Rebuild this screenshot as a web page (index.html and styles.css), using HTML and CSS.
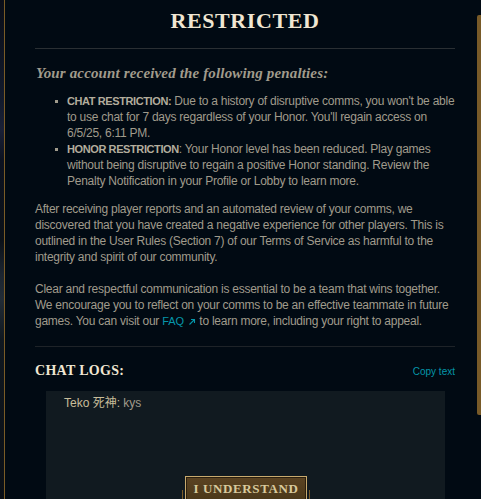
FILE: index.html
```html
<!DOCTYPE html>
<html>
<head>
<meta charset="utf-8">
<link rel="stylesheet" href="styles.css">
</head>
<body>
<div class="page">
  <div class="backdrop"></div>
  <div class="modal">
    <div class="content">
      <h1 class="title">RESTRICTED</h1>
      <hr class="divider">
      <h2 class="subtitle">Your account received the following penalties:</h2>
      <ul class="penalties">
        <li><b>CHAT RESTRICTION:</b> Due to a history of disruptive comms, you won't be able to use chat for 7 days regardless of your Honor. You'll regain access on 6/5/25, 6:11 PM.</li>
        <li><b>HONOR RESTRICTION</b>: Your Honor level has been reduced. Play games without being disruptive to regain a positive Honor standing. Review the Penalty Notification in your Profile or Lobby to learn more.</li>
      </ul>
      <p class="para">After receiving player reports and an automated review of your comms, we discovered that you have created a negative experience for other players. This is outlined in the User Rules (Section 7) of our Terms of Service as harmful to the integrity and spirit of our community.</p>
      <p class="para">Clear and respectful communication is essential to be a team that wins together. We encourage you to reflect on your comms to be an effective teammate in future games. You can visit our <a class="link">FAQ <svg class="ext" width="8" height="8" viewBox="0 0 8 8"><path d="M1.5 6.5 L6.5 1.5 M3 1.5 H6.5 V5" fill="none" stroke="currentColor" stroke-width="1.1"/></svg></a> to learn more, including your right to appeal.</p>
      <hr class="divider divider-low">
      <div class="logs-head">
        <h3 class="logs-title">CHAT LOGS:</h3>
        <a class="copy">Copy text</a>
      </div>
      <div class="logbox">
        <div class="logline"><span class="who">Teko 死神:</span> kys</div>
      </div>
    </div>
    <div class="scrolltrack"><div class="thumb"></div></div>
  </div>
  <div class="footer">
    <span class="deco"></span>
    <button class="btn">I UNDERSTAND</button>
    <span class="deco"></span>
  </div>
</div>
</body>
</html>
```
FILE: styles.css
```css
html, body {
  margin: 0;
  padding: 0;
  background: #010a13;
  overflow: hidden;
}
.page {
  position: relative;
  display: flex;
  width: 481px;
  height: 499px;
  overflow: hidden;
}
.backdrop {
  width: 4px;
  background: linear-gradient(180deg, #0a0e18 0%, #121a2c 20%, #1a2036 26%, #0c1220 32%, #0b1118 48%, #1c2530 55%, #222c36 60%, #101820 68%, #0a0f16 100%);
  border-right: 1px solid #7a5c26;
  flex: none;
}
.modal {
  flex: 1;
  display: flex;
  background: #010a13;
}
.content {
  width: 420px;
  padding: 0 0 0 30px;
  flex: none;
}
.title {
  margin: 0;
  padding-top: 6px;
  height: 30px;
  font-family: "Liberation Serif", serif;
  font-weight: bold;
  font-size: 22px;
  line-height: 30px;
  letter-spacing: 0.6px;
  color: #f0e6d2;
  text-align: center;
}
.divider {
  margin: 12px 0 0;
  border: 0;
  height: 1px;
  background: #2a2f33;
}
.subtitle {
  margin: 15px 0 0 1px;
  font-family: "Liberation Serif", serif;
  font-style: italic;
  font-weight: bold;
  font-size: 15px;
  line-height: 18px;
  letter-spacing: 0.15px;
  color: #a09b8c;
}
.penalties {
  margin: 11px 0 0;
  padding: 0 0 0 32px;
  font-family: "Liberation Sans", sans-serif;
  font-size: 12px;
  line-height: 16px;
  letter-spacing: -0.25px;
  color: #a09b8c;
  list-style: none;
}
.penalties li {
  position: relative;
}
.penalties li::before {
  content: "";
  position: absolute;
  left: -12px;
  top: 7px;
  width: 3px;
  height: 3px;
  background: #a09b8c;
}
.penalties b {
  color: #b3ad9d;
  font-size: 11px;
  letter-spacing: -0.4px;
}
.para {
  margin: 12px 0 0;
  font-family: "Liberation Sans", sans-serif;
  font-size: 12px;
  line-height: 16px;
  letter-spacing: -0.25px;
  color: #a09b8c;
}
.para + .para {
  margin-top: 16px;
}
.link {
  color: #0596aa;
  font-size: 11px;
  letter-spacing: 0;
}
.ext {
  vertical-align: -1px;
  margin-left: 1px;
}
.divider-low {
  margin-top: 17px;
  background: #1e2328;
}
.logs-head {
  display: flex;
  justify-content: space-between;
  align-items: center;
  margin-top: 15px;
}
.logs-title {
  margin: 0;
  font-family: "Liberation Serif", serif;
  font-weight: bold;
  font-size: 14px;
  line-height: 18px;
  letter-spacing: 0.3px;
  color: #f0e6d2;
}
.copy {
  font-family: "Liberation Sans", sans-serif;
  font-size: 10px;
  color: #0596aa;
}
.logbox {
  margin: 11px 10px 0 11px;
  height: 120px;
  background: #111a20;
  padding: 4px 18px;
}
.logline {
  font-family: "Liberation Sans", "Noto Sans CJK SC", sans-serif;
  font-size: 12px;
  line-height: 16px;
  color: #a09b8c;
}
.who {
  color: #c8bd9a;
}
.scrolltrack {
  flex: 1;
  display: flex;
  justify-content: flex-end;
  padding-top: 15px;
}
.thumb {
  width: 4px;
  height: 400px;
  background: #785a28;
  border-radius: 2px 0 0 2px;
}
.footer {
  position: absolute;
  left: 182px;
  bottom: 0;
  width: 128px;
  height: 34px;
  display: flex;
  align-items: flex-end;
  justify-content: space-between;
}
.footer::before {
  content: "";
  position: absolute;
  left: -136px;
  right: -135px;
  top: 0;
  bottom: 0;
  background: linear-gradient(180deg, rgba(6,12,18,0) 0%, rgba(6,12,18,0.75) 100%);
  z-index: -1;
}
.deco {
  width: 1px;
  height: 9px;
  background: #785a28;
}
.btn {
  align-self: flex-start;
  margin-top: 11px;
  width: 122px;
  height: 26px;
  padding: 0;
  border: 1px solid #c8aa6e;
  box-shadow: inset 0 0 0 1px #2a1e0e;
  background: linear-gradient(180deg, #5b4322 0%, #4a3719 100%);
  font-family: "Liberation Serif", serif;
  font-weight: bold;
  font-size: 13px;
  letter-spacing: 0.6px;
  color: #d8c99c;
  line-height: 22px;
  text-align: center;
}
```
